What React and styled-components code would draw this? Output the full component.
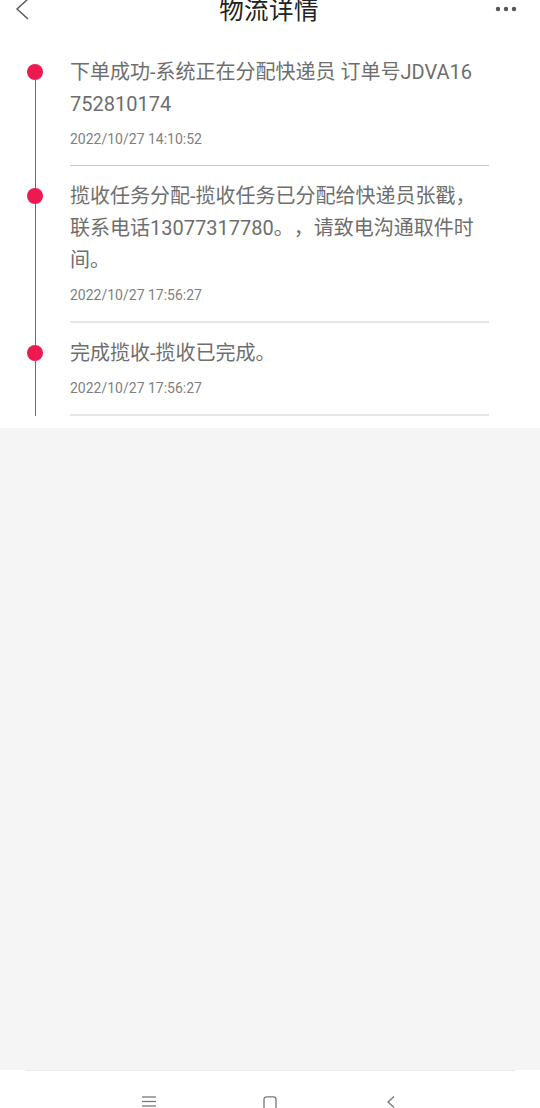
import React from "react";
import styled, { createGlobalStyle } from "styled-components";

const Global = createGlobalStyle`
  html, body { margin: 0; padding: 0; background: #f5f5f5; }
  body { font-family: Roboto, "Noto Sans CJK SC", sans-serif; text-spacing-trim: space-all; }
  * { box-sizing: border-box; }
`;

const Page = styled.div`
  width: 540px;
  height: 1108px;
  display: flex;
  flex-direction: column;
  overflow: hidden;
  background: #f5f5f5;
`;

const Sheet = styled.div`
  background: #fff;
  padding-bottom: 12px;
`;

const Header = styled.header`
  height: 22px;
  display: grid;
  grid-template-columns: 1fr auto 1fr;
  align-items: center;
  padding: 0 14px 0 12px;
`;

const Title = styled.h1`
  margin: 0;
  font-size: 24.5px;
  line-height: 22px;
  font-weight: 400;
  color: #222;
  letter-spacing: 0.4px;
`;

const IconBtn = styled.div`
  width: ${(p) => p.$w}px;
  height: 22px;
  display: flex;
  align-items: center;
  justify-content: center;
  justify-self: ${(p) => p.$align};
  margin-right: ${(p) => p.$mr || 0}px;
`;

const Timeline = styled.div`
  padding-top: 20px;
`;

const Item = styled.div`
  display: flex;
`;

const Rail = styled.div`
  width: 70px;
  flex: none;
  display: flex;
  flex-direction: column;
  align-items: center;
`;

const RailTop = styled.div`
  width: 1px;
  height: 22px;
  flex: none;
  background: ${(p) => (p.$blank ? "transparent" : "#6b6b6b")};
`;

const Dot = styled.div`
  width: 16px;
  height: 16px;
  border-radius: 50%;
  background: #ec1a50;
  flex: none;
`;

const RailLine = styled.div`
  width: 1px;
  flex: 1;
  background: #6b6b6b;
`;

const Content = styled.div`
  width: 419px;
  padding: 14px 0 16px;
  border-bottom: ${(p) => (p.$thin ? "1px solid #c9c9c9" : "2px solid #e6e6e6")};
`;

const Message = styled.p`
  margin: 0;
  max-width: 410px;
  font-size: 20px;
  line-height: 32px;
  color: #6e6e6e;
  word-break: break-all;
`;

const Time = styled.div`
  margin-top: 9px;
  font-size: 14px;
  line-height: 20px;
  color: #7f7f7f;
`;

const Filler = styled.div`
  flex: 1;
  background: #f5f5f5;
`;

const NavBar = styled.nav`
  height: 38px;
  flex: none;
  background: #fff;
  position: relative;
  display: flex;
  justify-content: center;
  gap: 101px;
  padding-top: 26px;
  overflow: hidden;
  &::before {
    content: "";
    position: absolute;
    top: 0;
    left: 25px;
    right: 25px;
    height: 1px;
    background: #ececec;
  }
`;

const NavIcon = styled.div`
  width: 20px;
  height: 20px;
  display: flex;
  justify-content: center;
`;

const events = [
  {
    text: "下单成功-系统正在分配快递员 订单号JDVA16752810174",
    time: "2022/10/27 14:10:52",
  },
  {
    text: "揽收任务分配-揽收任务已分配给快递员张戳，联系电话13077317780。，请致电沟通取件时间。",
    time: "2022/10/27 17:56:27",
  },
  {
    text: "完成揽收-揽收已完成。",
    time: "2022/10/27 17:56:27",
  },
];

export default function App() {
  return (
    <Page>
      <Global />
      <Sheet>
        <Header>
          <IconBtn $w={20} $align="start">
            <svg width="16" height="24" viewBox="0 0 16 24" style={{ marginTop: -4 }}>
              <polyline points="14,2 3,12 14,22" fill="none" stroke="#555" strokeWidth="1.4" />
            </svg>
          </IconBtn>
          <Title>物流详情</Title>
          <IconBtn $w={24} $align="end" $mr={8}>
            <svg width="22" height="6" viewBox="0 0 22 6" style={{ marginTop: -4 }}>
              <circle cx="3" cy="3" r="2.2" fill="#555" />
              <circle cx="11" cy="3" r="2.2" fill="#555" />
              <circle cx="19" cy="3" r="2.2" fill="#555" />
            </svg>
          </IconBtn>
        </Header>
        <Timeline>
          {events.map((e, i) => (
            <Item key={i}>
              <Rail>
                <RailTop $blank={i === 0} />
                <Dot />
                <RailLine />
              </Rail>
              <Content $thin={i === 0}>
                <Message>{e.text}</Message>
                <Time>{e.time}</Time>
              </Content>
            </Item>
          ))}
        </Timeline>
      </Sheet>
      <Filler />
      <NavBar>
        <NavIcon>
          <svg width="14" height="20" viewBox="0 0 14 20">
            <line x1="0" y1="1" x2="14" y2="1" stroke="#777" strokeWidth="1.3" />
            <line x1="0" y1="5.5" x2="14" y2="5.5" stroke="#777" strokeWidth="1.3" />
            <line x1="0" y1="10" x2="14" y2="10" stroke="#777" strokeWidth="1.3" />
          </svg>
        </NavIcon>
        <NavIcon>
          <svg width="14" height="20" viewBox="0 0 14 20">
            <rect x="1" y="0.8" width="12" height="15" rx="2.5" fill="none" stroke="#777" strokeWidth="1.3" />
          </svg>
        </NavIcon>
        <NavIcon>
          <svg width="10" height="20" viewBox="0 0 10 20">
            <polyline points="8,0.5 2,6 8,11.5" fill="none" stroke="#777" strokeWidth="1.3" />
          </svg>
        </NavIcon>
      </NavBar>
    </Page>
  );
}
